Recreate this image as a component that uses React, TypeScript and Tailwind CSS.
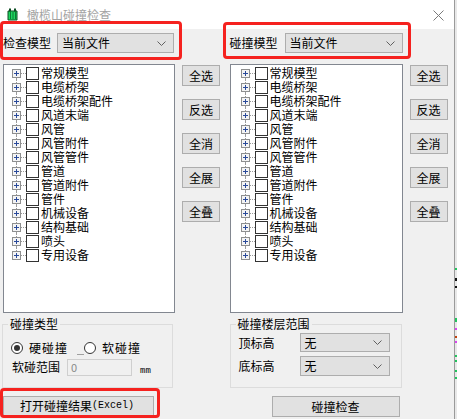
import React from "react";

const CJK = "font-['Noto_Sans_CJK_SC','Microsoft_YaHei',sans-serif]";

const items = [
  "常规模型",
  "电缆桥架",
  "电缆桥架配件",
  "风道末端",
  "风管",
  "风管附件",
  "风管管件",
  "管道",
  "管道附件",
  "管件",
  "机械设备",
  "结构基础",
  "喷头",
  "专用设备",
];

const Expander = () => (
  <svg width="9" height="9" viewBox="0 0 9 9" className="shrink-0">
    <rect x="0.5" y="0.5" width="8" height="8" fill="#f4f4f4" stroke="#8e8f8f" />
    <path d="M2 4.5h5M4.5 2v5" stroke="#2a4a9a" strokeWidth="1" />
  </svg>
);

const Chevron = () => (
  <svg width="9" height="5" viewBox="0 0 9 5">
    <path d="M0.5 0.5l4 4 4-4" fill="none" stroke="#606060" strokeWidth="1" />
  </svg>
);

const Tree = ({ pad }: { pad: string }) => (
  <div className={`h-[249px] border border-[#828790] bg-white pt-[1px] ${pad}`}>
    {items.map((it, i) => (
      <div key={it} className="flex h-[14px] items-center">
        <div className="flex h-full w-[9px] flex-col items-center">
          <div
            className={`w-0 flex-1 ${i > 0 ? "border-l border-dotted border-[#9a9a9a]" : ""}`}
          />
          <Expander />
          <div
            className={`w-0 flex-1 ${i < items.length - 1 ? "border-l border-dotted border-[#9a9a9a]" : ""}`}
          />
        </div>
        <div className="h-0 w-[5px] border-t border-dotted border-[#9a9a9a]" />
        <div className="h-[13px] w-[13px] shrink-0 border border-[#333333] bg-white" />
        <span className="ml-[2px] whitespace-nowrap text-[12px] leading-[14px] text-black">
          {it}
        </span>
      </div>
    ))}
  </div>
);

const SideButtons = () => (
  <div className="mt-[1px] flex w-[38px] flex-col gap-[13px]">
    {["全选", "反选", "全消", "全展", "全叠"].map((b) => (
      <button
        key={b}
        className="h-[21px] w-[38px] border border-[#adadad] bg-[#e1e1e1] text-[12px] leading-[19px] text-black"
      >
        {b}
      </button>
    ))}
  </div>
);

const Select = ({ text, w, h }: { text: string; w: string; h: string }) => (
  <div
    className={`flex items-center justify-between border border-[#adadad] bg-[#e1e1e1] pl-[4px] pr-[7px] ${w} ${h}`}
  >
    <span className="text-[12px] leading-[14px] text-black">{text}</span>
    <Chevron />
  </div>
);

const Radio = ({ on }: { on: boolean }) => (
  <svg width="12" height="12" viewBox="0 0 12 12" className="shrink-0">
    <circle cx="6" cy="6" r="5.5" fill="#fff" stroke="#333" />
    {on && <circle cx="6" cy="6" r="3" fill="#333" />}
  </svg>
);

const App = () => {
  return (
    <div className={`flex h-[419px] w-[457px] overflow-hidden bg-[#f0f0f0] ${CJK}`}>
      <div className="relative flex h-full w-[455px] flex-col border-r border-[#9a9a9a]">
        {/* title bar */}
        <div className="flex h-[29px] shrink-0 items-center bg-white">
          <svg width="11" height="13" viewBox="0 0 11 13" className="ml-[7px]">
            <path d="M1 3h9v9H1z" fill="#1ed760" stroke="#0d4d22" />
            <path d="M2 0.5h2v3H2zM7 0.5h2v3H7z" fill="#0d4d22" />
            <path d="M3.5 4v7M6 4v7M8.5 4v7" stroke="#0a7a34" strokeWidth="1" />
          </svg>
          <span className="ml-[9px] text-[12px] leading-[14px] text-[#a3a3a3]">
            橄榄山碰撞检查
          </span>
          <svg width="11" height="11" viewBox="0 0 11 11" className="ml-auto mr-[10px] mt-[1px]">
            <path d="M0.5 0.5l10 10M10.5 0.5l-10 10" stroke="#7a7a7a" strokeWidth="1" />
          </svg>
        </div>

        {/* body */}
        <div className="flex flex-1">
          {/* left column */}
          <div className="flex w-[227px] flex-col">
            <div className="ml-[3px] mt-[4px] flex h-[20px] items-center">
              <span className="w-[54px] text-[12px] leading-[14px] text-black">检查模型</span>
              <Select text="当前文件" w="w-[117px]" h="h-[20px]" />
            </div>
            <div className="ml-[3px] mt-[11px] flex gap-[7px]">
              <div className="w-[172px]">
                <Tree pad="pl-[8px]" />
              </div>
              <SideButtons />
            </div>
            <fieldset className="ml-[2px] mt-[4px] h-[71px] w-[171px] border border-[#dcdcdc]">
              <legend className="ml-[5px] px-[2px] text-[12px] leading-[14px] text-black">
                碰撞类型
              </legend>
              <div className="pl-[8px]">
                <div className="mt-[10px] flex h-[14px] items-center">
                  <Radio on />
                  <span className="ml-[6px] text-[12px] leading-[14px] tracking-[1px] text-black">
                    硬碰撞
                  </span>
                  <div className="ml-[9px] mt-[12px] h-0 w-[7px] border-t border-[#a0a0a0]" />
                  <Radio on={false} />
                  <span className="ml-[6px] text-[12px] leading-[14px] tracking-[1px] text-black">
                    软碰撞
                  </span>
                </div>
                <div className="mt-[3px] flex items-center">
                  <span className="w-[56px] pl-[1px] text-[12px] leading-[14px] text-black">
                    软碰范围
                  </span>
                  <div className="flex h-[17px] w-[65px] items-center border border-[#cfcfcf] bg-[#f0f0f0] pl-[3px] text-[11px] leading-[13px] text-[#8a8a8a]">
                    0
                  </div>
                  <span className="ml-[8px] mt-[8px] font-['Liberation_Mono',monospace] text-[9px] leading-[10px] text-black">
                    mm
                  </span>
                </div>
              </div>
            </fieldset>
            <button className="ml-[3px] mt-[8px] flex h-[20px] w-[151px] items-center border border-[#adadad] bg-[#e1e1e1] pl-[16px] text-black">
              <span className="text-[12px] leading-[14px]">打开碰撞结果</span>
              <span className="font-['Liberation_Mono',monospace] text-[10px] leading-[14px]">
                (Excel)
              </span>
            </button>
          </div>

          {/* right column */}
          <div className="flex w-[228px] flex-col">
            <div className="ml-[3px] mt-[4px] flex h-[20px] items-center">
              <span className="w-[55px] text-[12px] leading-[14px] text-black">碰撞模型</span>
              <Select text="当前文件" w="w-[118px]" h="h-[20px]" />
            </div>
            <div className="ml-[3px] mt-[11px] flex gap-[7px]">
              <div className="w-[173px]">
                <Tree pad="pl-[10px]" />
              </div>
              <SideButtons />
            </div>
            <fieldset className="ml-[3px] mt-[4px] h-[71px] w-[172px] border border-[#dcdcdc]">
              <legend className="ml-[5px] px-[2px] text-[12px] leading-[14px] text-black">
                碰撞楼层范围
              </legend>
              <div className="pl-[8px]">
                <div className="mt-[2px] flex items-center">
                  <span className="w-[61px] text-[12px] leading-[14px] text-black">顶标高</span>
                  <Select text="无" w="w-[90px]" h="h-[19px]" />
                </div>
                <div className="mt-[4px] flex items-center">
                  <span className="w-[61px] text-[12px] leading-[14px] text-black">底标高</span>
                  <Select text="无" w="w-[90px]" h="h-[20px]" />
                </div>
              </div>
            </fieldset>
            <button className="ml-[45px] mt-[8px] h-[21px] w-[128px] border border-[#adadad] bg-[#e1e1e1] text-[12px] leading-[19px] text-black">
              碰撞检查
            </button>
          </div>
        </div>

        {/* annotation boxes */}
        <div className="pointer-events-none absolute left-0 top-[21px] h-[39px] w-[182px] rounded-[4px] border-[3px] border-[#f5221f]" />
        <div className="pointer-events-none absolute left-[223px] top-[22px] h-[37px] w-[188px] rounded-[4px] border-[3px] border-[#f5221f]" />
        <div className="pointer-events-none absolute left-0 top-[388px] h-[30px] w-[160px] rounded-[4px] border-[3px] border-[#f5221f]" />
      </div>
      <div className="flex h-full w-[2px] flex-col bg-[#e8e8e8]">
        <div className="mt-[268px] h-[2px] bg-[#22c55e]" />
        <div className="mt-[8px] h-[3px] bg-[#111]" />
        <div className="mt-[5px] h-[2px] bg-[#111]" />
        <div className="mt-[30px] h-[4px] bg-[#22c55e]" />
        <div className="mt-[6px] h-[2px] bg-[#d946ef]" />
        <div className="mt-[6px] h-[2px] bg-[#c2410c]" />
        <div className="mt-[3px] h-[2px] bg-[#d946ef]" />
        <div className="mt-[12px] h-[2px] bg-[#22c55e]" />
        <div className="mt-[3px] h-[2px] bg-[#22c55e]" />
        <div className="mt-[8px] h-[2px] bg-[#22c55e]" />
        <div className="mt-[5px] h-[2px] bg-[#22c55e]" />
      </div>
    </div>
  );
};

export default App;
